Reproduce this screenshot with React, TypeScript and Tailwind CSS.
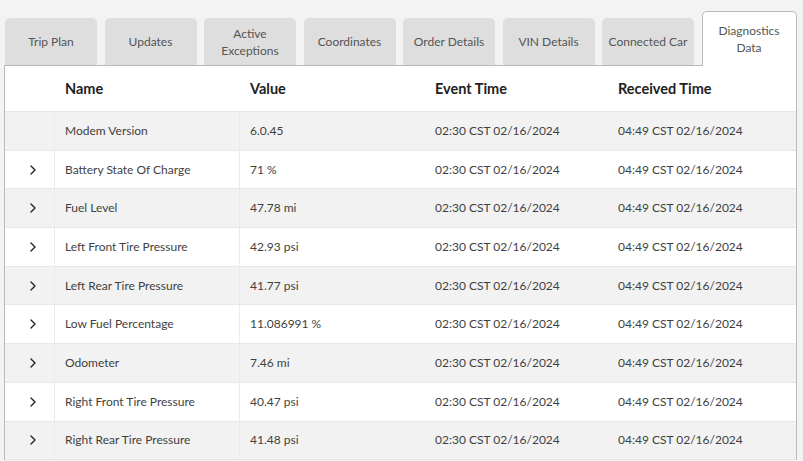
import { ChevronRight } from "lucide-react";

const tabs = [
  "Trip Plan",
  "Updates",
  "Active Exceptions",
  "Coordinates",
  "Order Details",
  "VIN Details",
  "Connected Car",
];

const rows: { name: string; value: string; expandable: boolean }[] = [
  { name: "Modem Version", value: "6.0.45", expandable: false },
  { name: "Battery State Of Charge", value: "71 %", expandable: true },
  { name: "Fuel Level", value: "47.78 mi", expandable: true },
  { name: "Left Front Tire Pressure", value: "42.93 psi", expandable: true },
  { name: "Left Rear Tire Pressure", value: "41.77 psi", expandable: true },
  { name: "Low Fuel Percentage", value: "11.086991 %", expandable: true },
  { name: "Odometer", value: "7.46 mi", expandable: true },
  { name: "Right Front Tire Pressure", value: "40.47 psi", expandable: true },
  { name: "Right Rear Tire Pressure", value: "41.48 psi", expandable: true },
];

const eventTime = "02:30 CST 02/16/2024";
const receivedTime = "04:49 CST 02/16/2024";

export default function App() {
  return (
    <div
      className="w-[803px] h-[461px] overflow-hidden bg-[#f3f3f3] text-[#333]"
      style={{ fontFamily: "Lato, 'Open Sans', sans-serif" }}
    >
      <div className="flex items-end gap-[7.5px] pl-[5px] pt-[11px] h-[65px]">
        {tabs.map((t) => (
          <div
            key={t}
            className="w-[92px] h-[47px] rounded-t-[5px] bg-[#dedede] flex items-center justify-center text-center text-[12px] leading-[17px] text-[#555] px-[2px]"
          >
            {t}
          </div>
        ))}
        <div className="w-[95px] h-[55px] -mb-px relative z-10 rounded-t-[5px] bg-white border border-[#b9b9b9] border-b-0 flex items-start justify-center pt-[10px] text-center text-[12px] leading-[17px] text-[#555] px-2">
          Diagnostics Data
        </div>
      </div>

      <div className="ml-[4px] w-[793px] bg-white border border-[#b9b9b9] border-b-0">
        <div className="grid grid-cols-[50px_185px_185px_185px_1fr] h-[46px] items-center border-b border-[#e6e6e6] text-[14.5px] font-bold text-[#222]">
          <div />
          <div className="pl-[10px]">Name</div>
          <div className="pl-[10px]">Value</div>
          <div className="pl-[10px]">Event Time</div>
          <div className="pl-[8px]">Received Time</div>
        </div>
        {rows.map((r, i) => (
          <div
            key={r.name}
            className={`grid grid-cols-[50px_185px_185px_185px_1fr] h-[38.7px] items-center border-b border-[#e8e8e8] text-[12px] text-[#3f3f3f] ${
              i % 2 === 0 ? "bg-[#f2f2f2]" : "bg-white"
            }`}
          >
            <div className="h-full flex items-center pl-[20px] border-r border-[#ebebeb]">
              {r.expandable && (
                <ChevronRight size={16} strokeWidth={2} className="text-[#222]" />
              )}
            </div>
            <div className="h-full flex items-center pl-[10px] border-r border-[#ebebeb]">
              {r.name}
            </div>
            <div className="pl-[10px]">{r.value}</div>
            <div className="pl-[10px]">{eventTime}</div>
            <div className="pl-[8px]">{receivedTime}</div>
          </div>
        ))}
      </div>
    </div>
  );
}
